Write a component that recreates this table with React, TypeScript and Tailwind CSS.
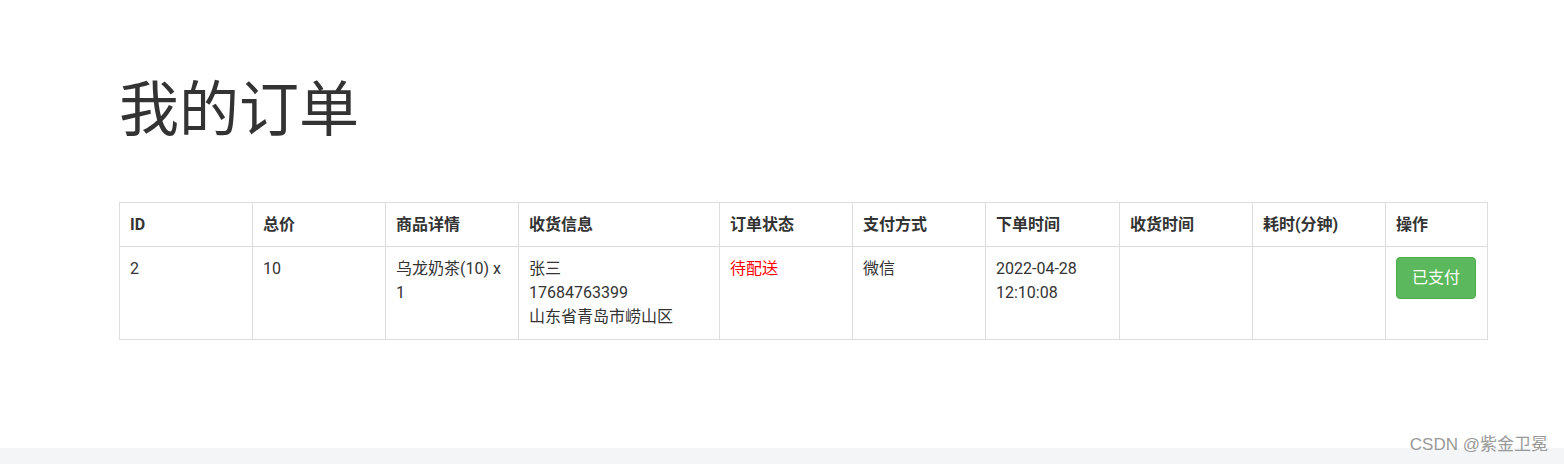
const cols = [
  { title: 'ID', w: 'w-[133px]' },
  { title: '总价', w: 'w-[133px]' },
  { title: '商品详情', w: 'w-[133px]' },
  { title: '收货信息', w: 'w-[201px]' },
  { title: '订单状态', w: 'w-[133px]' },
  { title: '支付方式', w: 'w-[133px]' },
  { title: '下单时间', w: 'w-[134px]' },
  { title: '收货时间', w: 'w-[133px]' },
  { title: '耗时(分钟)', w: 'w-[133px]' },
  { title: '操作', w: 'w-[102px]' },
]

const cell = 'border border-[#ddd] px-[10px] align-top'

export default function App() {
  return (
    <div className="relative h-[464px] w-[1564px] bg-white text-[#333] font-['Roboto','Noto_Sans_CJK_SC',sans-serif]">
      <div className="pl-[119px] pt-[78px]">
        <h1 className="text-[60px] leading-[1.1] font-normal">我的订单</h1>

        <table className="mt-[58px] w-[1368px] table-fixed border-collapse text-[16px] leading-[24px]">
          <thead>
            <tr>
              {cols.map(c => (
                <th key={c.title} className={`${cell} ${c.w} pt-[10px] pb-[9px] text-left font-bold`}>
                  {c.title}
                </th>
              ))}
            </tr>
          </thead>
          <tbody>
            <tr>
              <td className={`${cell} py-[10px]`}>2</td>
              <td className={`${cell} py-[10px]`}>10</td>
              <td className={`${cell} py-[10px]`}>乌龙奶茶(10) x 1</td>
              <td className={`${cell} py-[10px]`}>
                张三<br />17684763399<br />山东省青岛市崂山区
              </td>
              <td className={`${cell} py-[10px] text-[#ff0000]`}>待配送</td>
              <td className={`${cell} py-[10px]`}>微信</td>
              <td className={`${cell} py-[10px]`}>2022-04-28 12:10:08</td>
              <td className={`${cell} py-[10px]`}></td>
              <td className={`${cell} py-[10px]`}></td>
              <td className={`${cell} py-[10px]`}>
                <button className="rounded-[4px] border border-[#4cae4c] bg-[#5cb85c] px-[15px] py-[8px] text-[16px] leading-[24px] text-white">
                  已支付
                </button>
              </td>
            </tr>
          </tbody>
        </table>
      </div>

      {/* 底部灰条 + 水印 */}
      <div className="absolute bottom-0 left-0 h-[16px] w-full bg-[#f3f5f6]" />
      <div className="absolute right-[16px] top-[435px] text-[17px] leading-[20px] text-[#999] font-['Liberation_Sans','Noto_Sans_CJK_SC',sans-serif]">
        CSDN @紫金卫冕
      </div>
    </div>
  )
}
